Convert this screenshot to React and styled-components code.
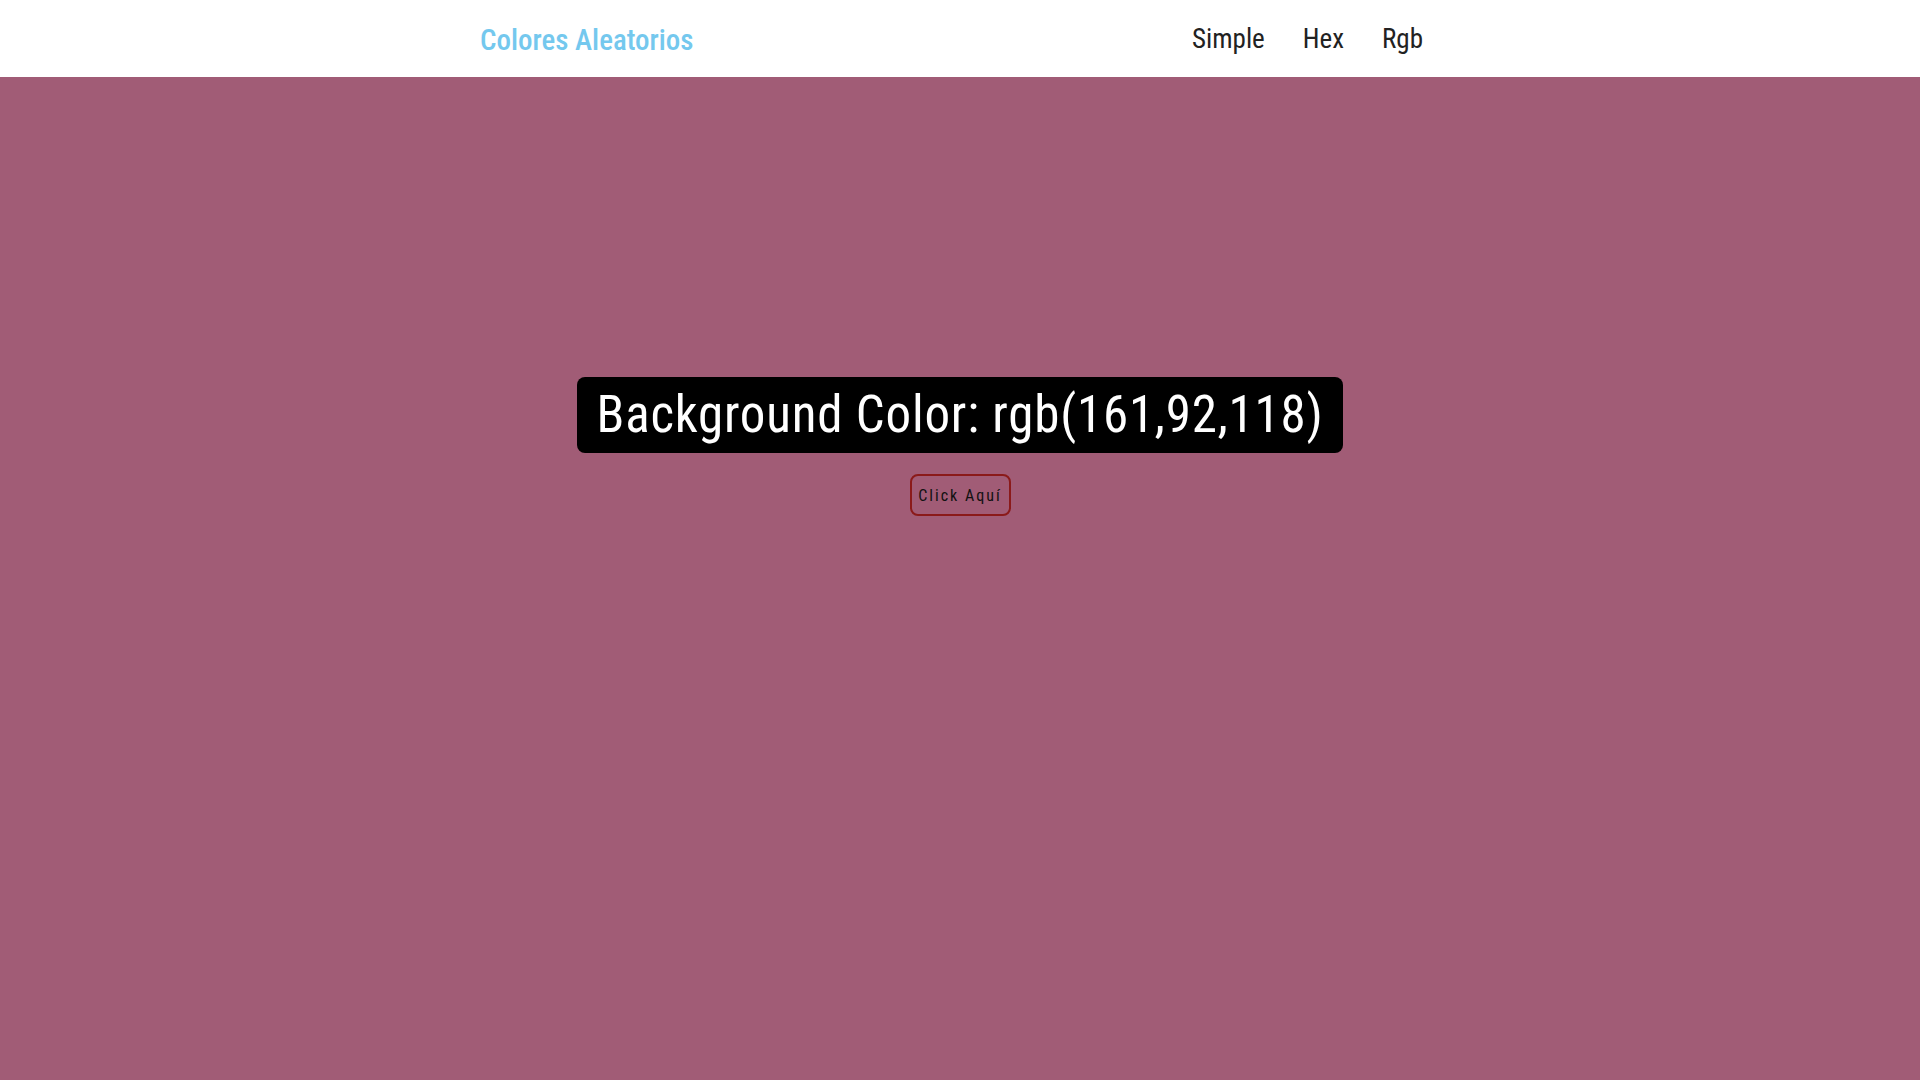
import styled, { createGlobalStyle } from "styled-components";
import { useState } from "react";

const GlobalStyle = createGlobalStyle`
  body {
    margin: 0;
    font-family: Roboto, "Open Sans", sans-serif;
    font-stretch: 75%;
  }
`;

const Page = styled.div`
  min-height: 100vh;
  display: flex;
  flex-direction: column;
  background: ${({ bg }) => bg};
`;

const Navbar = styled.nav`
  height: 77px;
  background: #ffffff;
  display: flex;
  justify-content: center;
`;

const NavInner = styled.div`
  width: 960px;
  display: flex;
  align-items: center;
  justify-content: space-between;
`;

const Brand = styled.a`
  font-size: 29px;
  font-weight: 500;
  color: #74c8ee;
  text-decoration: none;
  padding-top: 2px;
`;

const Links = styled.div`
  display: flex;
`;

const NavLink = styled.a`
  font-size: 27px;
  color: #222222;
  text-decoration: none;
  padding: 0 19px;
  &:last-child {
    padding-right: 17px;
  }
`;

const Main = styled.main`
  flex: 1;
  display: flex;
  flex-direction: column;
  align-items: center;
  padding-top: 300px;
  gap: 21px;
`;

const ColorTitle = styled.h1`
  margin: 0;
  background: #000000;
  color: #ffffff;
  font-weight: 400;
  font-size: 51px;
  letter-spacing: 0.8px;
  line-height: 76px;
  padding: 0 20px;
  border-radius: 8px;
`;

const Button = styled.button`
  width: 101px;
  height: 42px;
  padding: 0;
  background: transparent;
  border: 2px solid #8b1a1a;
  border-radius: 8px;
  font-family: inherit;
  font-stretch: 75%;
  font-size: 16px;
  font-weight: 400;
  letter-spacing: 2px;
  white-space: nowrap;
  color: #111111;
  cursor: pointer;
`;

const rand = () => Math.floor(Math.random() * 256);

const App = () => {
  const [color, setColor] = useState([161, 92, 118]);
  const rgb = `rgb(${color.join(",")})`;
  return (
    <>
      <GlobalStyle />
      <Page bg={rgb}>
        <Navbar>
          <NavInner>
            <Brand href="#">Colores Aleatorios</Brand>
            <Links>
              <NavLink href="#">Simple</NavLink>
              <NavLink href="#">Hex</NavLink>
              <NavLink href="#">Rgb</NavLink>
            </Links>
          </NavInner>
        </Navbar>
        <Main>
          <ColorTitle>Background Color: {rgb}</ColorTitle>
          <Button onClick={() => setColor([rand(), rand(), rand()])}>
            Click Aquí
          </Button>
        </Main>
      </Page>
    </>
  );
};

export default App;
